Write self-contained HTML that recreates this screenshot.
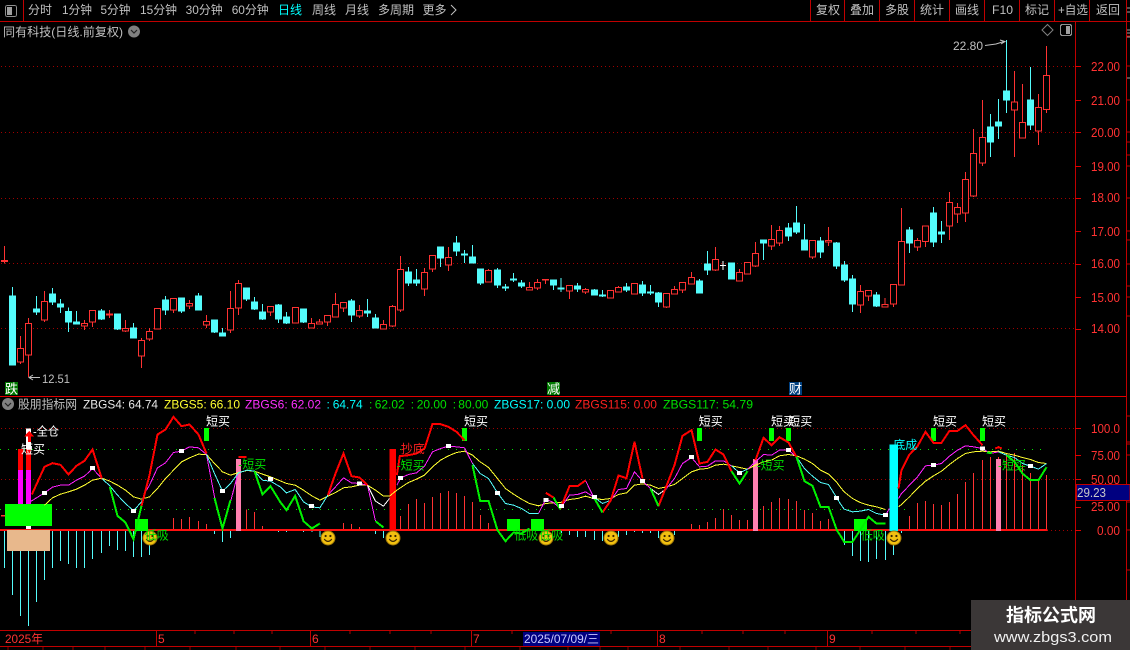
<!DOCTYPE html>
<html><head><meta charset="utf-8"><title>同有科技</title>
<style>
html,body{margin:0;padding:0;background:#000;width:1130px;height:650px;overflow:hidden}
svg{display:block}
text{font-family:"Liberation Sans","WenQuanYi Zen Hei","Noto Sans CJK SC",sans-serif;font-size:12px}
.tb{fill:#c0c0c0}
.ax{fill:#ff3232;font-size:13px}
.w{fill:#fff}
.g{fill:#00e000}
</style></head><body>
<svg width="1130" height="650" viewBox="0 0 1130 650" xmlns="http://www.w3.org/2000/svg">
<rect width="1130" height="650" fill="#000"/>

<!-- frame lines -->
<g shape-rendering="crispEdges" fill="none">
<path d="M0 21.5H1130M23.5 0V21M810.5 0V21M844.5 0V21M879.5 0V21M914.5 0V21M949.5 0V21M984.5 0V21M1019.5 0V21M1054.5 0V21M1089.5 0V21M1126.5 0V600" stroke="#c00000"/>
<path d="M1075.5 21V650" stroke="#c00000" stroke-width="1"/>
<path d="M0 396.5H1126" stroke="#e00000"/>
<path d="M0 630.5H1075M0 646.5H1075" stroke="#c00000"/>
<path d="M156.5 631V646M310.5 631V646M471.5 631V646M657.5 631V646M827.5 631V646" stroke="#c00000"/>
<path d="M195 631v3M234 631v3M272 631v3M350 631v3M390 631v3M431 631v3M512 631v3M611 631v3M702 631v3M743 631v3M785 631v3M872 631v3M916 631v3M960 631v3M1001 631v3M1040 631v3" stroke="#b00000"/>
<path d="M8 647v3M43 647v3M73 647v3M105 647v3M145 647v3M190 647v3M236 647v3M280 647v3M325 647v3M370 647v3M415 647v3M465 647v3M520 647v3M568 647v3M600 647v3M628 647v3M680 647v3M729 647v3M768 647v3M816 647v3M860 647v3M905 647v3M950 647v3M1001 647v3M1046 647v3" stroke="#900000"/>
<path d="M1075 66.5h6M1075 100.5h6M1075 132.5h6M1075 166.5h6M1075 198.5h6M1075 231.5h6M1075 264.5h6M1075 297.5h6M1075 329.5h6M1075 428.5h6M1075 455.5h6M1075 479.5h6M1075 507.5h6M1075 530.5h6" stroke="#e00000"/>
<path d="M1126 36h4M1126 66h4M1126 100h4M1126 132h4M1126 142h4M1126 155h4M1126 166h4M1126 198h4M1126 231h4M1126 240h4M1126 264h4M1126 286h4M1126 297h4M1126 316h4M1126 416h4M1126 442h4M1126 444h4M1126 455h4M1126 489h4M1126 502h4M1126 530h4M1126 570h4" stroke="#c00000"/>
<path d="M1127 8h3M1127 12h3M1127 30h3M1127 33h3M1127 37h3M1127 78h3" stroke="#a0a0a0"/>
</g>

<!-- dotted grids -->
<g fill="none">
<path d="M1 66.5H1075M1 132.5H1075M1 198.5H1075M1 263.5H1075M1 328.5H1075M1 428.5H1075M1 479.5H1075M1047 530.5H1075" stroke="#a00000" stroke-dasharray="1 3"/>
<path d="M0 449.5H1046M0 509.5H910" stroke="#00e000" stroke-dasharray="1 7"/>
</g>

<!-- candles: section 1 -->
<g transform="translate(.167,230.167) scale(.33333)" shape-rendering="crispEdges" stroke-width="3">
<path fill="none" stroke="#ff3232" d="M13 48V100M61 318V402M85 264V440M133 183V276M253 270V300M277 240V291M328 240V264M376 270V306M424 324V414M448 294V333M472 234V297M520 204V249M568 210V237M619 255V294M691 183V309M715 150V255M811 228V258"/>
<path fill="#000" stroke="#ff3232" d="M4 91h18V94h-18zM52 355h18V395h-18zM76 280h18V374h-18zM124 214h18V269h-18zM244 280h18V288h-18zM268 241h18V275h-18zM319 252h18V255h-18zM367 295h18V302h-18zM415 331h18V377h-18zM439 304h18V327h-18zM463 235h18V296h-18zM511 205h18V240h-18zM559 220h18V228h-18zM610 274h18V285h-18zM682 235h18V299h-18zM706 160h18V233h-18zM802 229h18V246h-18z"/>
<path fill="#54fcfc" stroke="#54fcfc" d="M37 171V405M28 198h18V405h-18zM109 198V255M100 237h18V246h-18zM157 174V225M148 192h18V216h-18zM181 207V249M172 222h18V231h-18zM205 232V306M196 244h18V276h-18zM229 243V282M220 276h18V282h-18zM304 237V270M295 243h18V267h-18zM352 252V300M343 252h18V297h-18zM400 279V324M391 294h18V324h-18zM496 198V255M487 210h18V240h-18zM544 204V249M535 204h18V243h-18zM595 189V240M586 198h18V240h-18zM643 270V309M634 270h18V306h-18zM667 294V318M658 309h18V318h-18zM739 174V213M730 174h18V207h-18zM763 201V240M754 216h18V237h-18zM787 222V270M778 246h18V267h-18zM835 222V279M826 225h18V267h-18z"/>
</g>
<!-- section 2 -->
<g transform="translate(280.167,230.167) scale(.33333)" shape-rendering="crispEdges" stroke-width="3">
<path fill="none" stroke="#ff3232" d="M46 231V279M94 264V294M118 267V282M142 255V288M166 189V261M190 216V246M238 225V264M310 270V297M337 225V291M361 78V246M433 114V198M457 75V126M505 51V123M625 117V156M748 156V180M772 147V180M796 147V162"/>
<path fill="#000" stroke="#ff3232" d="M37 232h18V278h-18zM85 280h18V293h-18zM109 275h18V281h-18zM133 256h18V275h-18zM157 223h18V260h-18zM181 217h18V233h-18zM229 241h18V258h-18zM301 283h18V296h-18zM328 229h18V288h-18zM352 118h18V240h-18zM424 127h18V177h-18zM448 76h18V117h-18zM496 82h18V105h-18zM616 121h18V156h-18zM739 172h18V179h-18zM763 157h18V173h-18zM787 148h18V150h-18z"/>
<path fill="#54fcfc" stroke="#54fcfc" d="M19 246V282M10 261h18V279h-18zM70 237V279M61 237h18V276h-18zM214 207V276M205 213h18V255h-18zM262 207V261M253 243h18V249h-18zM286 252V294M277 264h18V294h-18zM385 111V168M376 126h18V159h-18zM409 117V168M400 150h18V159h-18zM481 51V111M472 51h18V84h-18zM529 18V78M520 39h18V63h-18zM553 60V99M544 72h18V75h-18zM577 45V99M568 81h18V99h-18zM601 117V165M592 117h18V159h-18zM652 114V174M643 120h18V165h-18zM676 162V183M667 171h18V174h-18zM700 129V156M691 147h18V150h-18zM724 150V174M715 159h18V168h-18zM820 150V180M811 150h18V165h-18z"/>
</g>
<!-- section 3 -->
<g transform="translate(560.167,200.167) scale(.33333)" shape-rendering="crispEdges" stroke-width="3">
<path fill="none" stroke="#ff3232" d="M28 255V297M76 264V282M151 270V294M175 258V276M223 249V282M319 279V324M343 258V282M367 246V279M394 216V252M466 141V213M538 207V243M562 186V222M586 126V201M634 75V150M658 78V138M757 120V177M805 81V138"/>
<path fill="#000" stroke="#ff3232" d="M19 256h18V272h-18zM67 268h18V275h-18zM142 271h18V293h-18zM166 262h18V275h-18zM214 250h18V281h-18zM310 280h18V320h-18zM334 268h18V281h-18zM358 247h18V269h-18zM385 232h18V251h-18zM457 178h18V209h-18zM529 217h18V242h-18zM553 187h18V221h-18zM577 160h18V197h-18zM625 118h18V137h-18zM649 91h18V128h-18zM748 121h18V170h-18zM796 121h18V125h-18z"/>
<path fill="#54fcfc" stroke="#54fcfc" d="M3 234V276M-6 264h18V267h-18zM52 249V276M43 258h18V267h-18zM103 267V285M94 270h18V285h-18zM127 270V291M118 285h18V288h-18zM199 249V276M190 261h18V270h-18zM247 243V288M238 255h18V279h-18zM271 255V285M262 276h18V279h-18zM295 276V321M286 279h18V306h-18zM418 237V279M409 243h18V279h-18zM442 153V225M433 192h18V210h-18zM514 189V237M505 189h18V237h-18zM610 120V180M601 120h18V129h-18zM685 69V123M676 84h18V108h-18zM709 18V102M700 69h18V96h-18zM733 72V150M724 120h18V150h-18zM781 111V174M772 123h18V156h-18zM829 126V207M820 129h18V198h-18z"/>
<path fill="none" stroke="#fff" d="M489 183V210M480 196h18"/>
</g>
<!-- section 4 -->
<g transform="translate(840.167,30.167) scale(.33333)" shape-rendering="crispEdges" stroke-width="3">
<path fill="none" stroke="#ff3232" d="M61 765V849M85 780V813M135 804V831M160 762V831M184 534V764M232 624V663M256 586V651M328 486V630M352 519V579M376 426V576M400 297V501M427 210V408M523 123V381M547 162V324M595 192V345M619 48V249"/>
<path fill="#000" stroke="#ff3232" d="M52 784h18V824h-18zM76 781h18V797h-18zM126 823h18V830h-18zM151 763h18V821h-18zM175 634h18V764h-18zM223 631h18V650h-18zM247 587h18V634h-18zM319 517h18V587h-18zM343 532h18V551h-18zM367 448h18V548h-18zM391 370h18V497h-18zM418 322h18V398h-18zM514 216h18V239h-18zM538 277h18V323h-18zM586 232h18V302h-18zM610 136h18V238h-18z"/>
<path fill="#54fcfc" stroke="#54fcfc" d="M13 693V756M4 705h18V750h-18zM37 735V846M28 747h18V822h-18zM109 786V831M100 795h18V828h-18zM208 591V669M199 600h18V639h-18zM280 531V651M271 549h18V636h-18zM304 573V639M295 606h18V611h-18zM451 252V381M442 291h18V336h-18zM475 207V327M466 276h18V288h-18zM499 30V249M490 183h18V210h-18zM571 111V300M562 210h18V285h-18z"/>
</g>

<!-- lower panel -->
<g transform="translate(.167,395.167) scale(.33333)" shape-rendering="crispEdges" fill="none">
<!-- histogram cyan -->
<path stroke="#54fcfc" stroke-width="3" d="M13 405V519M37 405V600M61 405V663M85 405V692M109 405V621M133 405V555M157 405V519M181 405V498M205 405V507M229 405V519M253 405V519M277 405V492M304 405V474M328 405V453M352 405V465M376 405V468M400 405V486M424 405V486M448 405V480M643 405V417M667 405V441M691 405V429M835 405V411M859 405V411M885 405V408M910 405V411M935 405V411M959 405V426M983 405V420M1126 405V417M1150 405V429M1178 405V420M1684 405V414M1708 405V420M1732 405V426M1756 405V426M1783 405V435M1807 405V438M1831 405V441M1855 405V426M1879 405V420M1903 405V411M1927 405V414M1951 405V414M1975 405V429M1999 405V435M2023 405V420M2533 405V450M2557 405V483M2581 405V498M2605 405V501M2629 405V492M2656 405V495M2680 405V480M2704 405V414"/>
<!-- histogram red -->
<path stroke="#ff3232" stroke-width="3" d="M520 405V369M544 405V372M568 405V366M595 405V378M619 405V387M739 405V343M763 405V351M787 405V393M1030 405V384M1054 405V387M1078 405V396M1201 405V363M1225 405V327M1249 405V312M1273 405V324M1297 405V306M1321 405V294M1345 405V288M1369 405V294M1393 405V303M1417 405V321M1441 405V360M1465 405V384M2074 405V387M2098 405V390M2122 405V381M2146 405V369M2170 405V342M2194 405V360M2218 405V375M2242 405V375M2290 405V333M2314 405V321M2338 405V309M2365 405V312M2389 405V318M2413 405V345M2437 405V354M2461 405V378M2485 405V372M2509 405V396M2728 405V363M2752 405V324M2776 405V318M2800 405V327M2824 405V330M2848 405V321M2872 405V297M2896 405V261M2920 405V234M2947 405V195M2971 405V186M2995 405V186M3019 405V174M3043 405V174M3067 405V210M3091 405V234M3115 405V255M3139 405V240"/>
<path stroke="#ff1010" stroke-width="6" d="M0 405H3142"/>
<!-- left tower -->
<g stroke="none">
<rect x="54" y="162" width="15" height="63" fill="#f00"/><rect x="54" y="225" width="15" height="102" fill="#f0f"/>
<rect x="78" y="162" width="15" height="63" fill="#f00"/><rect x="78" y="225" width="15" height="102" fill="#f0f"/>
<rect x="78" y="100" width="15" height="62" fill="#fff"/>
<rect x="78" y="393" width="15" height="9" fill="#fff"/>
<path d="M87 107L102 124H92V140H83V124H72z" fill="#f00"/>
<rect x="3" y="360" width="12" height="4" fill="#f33"/>
<rect x="15" y="327" width="141" height="66" fill="#0f0"/>
<rect x="21" y="405" width="129" height="63" fill="#e8b88c"/>
<!-- big columns -->
<rect x="708" y="192" width="15" height="216" fill="#ff80b0"/>
<rect x="1168" y="162" width="20" height="243" fill="#f00"/>
<rect x="2259" y="192" width="15" height="216" fill="#ff80b0"/>
<rect x="2668" y="148" width="26" height="260" fill="#0ff"/>
<rect x="2988" y="192" width="15" height="216" fill="#ff80b0"/>
<!-- green squares -->
<rect x="405" y="372" width="39" height="36" fill="#0f0"/>
<rect x="1521" y="372" width="39" height="36" fill="#0f0"/>
<rect x="1593" y="372" width="39" height="36" fill="#0f0"/>
<rect x="2562" y="372" width="39" height="36" fill="#0f0"/>
<!-- green tags -->
<rect x="612" y="99" width="15" height="39" fill="#0f0"/>
<rect x="1386" y="99" width="15" height="39" fill="#0f0"/>
<rect x="2091" y="99" width="15" height="39" fill="#0f0"/>
<rect x="2307" y="99" width="15" height="39" fill="#0f0"/>
<rect x="2358" y="99" width="15" height="39" fill="#0f0"/>
<rect x="2793" y="99" width="15" height="39" fill="#0f0"/>
<rect x="2940" y="99" width="15" height="39" fill="#0f0"/>
</g>
<!-- yellow -->
<polyline stroke="#ffff30" stroke-width="3" points="133,330 157,308 181,297 205,290 229,282 253,270 277,255 305,249 329,258 352,270 376,285 400,305 424,312 448,305 472,280 496,250 520,225 544,200 568,188 595,177 619,178 643,205 667,230 691,240 715,232 740,226 763,228 787,237 811,245 840,257 859,265 885,270 910,285 935,302 959,315 983,303 1006,292 1030,278 1054,275 1078,270 1102,270 1126,285 1150,303 1168,303 1190,285 1225,262 1249,252 1273,240 1297,215 1321,195 1345,182 1369,172 1393,168 1417,180 1440,200 1465,217 1492,250 1516,280 1540,297 1564,312 1588,325 1615,332 1637,325 1660,323 1680,322 1708,313 1732,310 1756,303 1780,310 1807,313 1832,310 1855,298 1879,293 1903,270 1927,266 1951,270 1975,280 1999,275 2023,268 2047,250 2074,230 2098,222 2122,220 2146,210 2170,207 2194,212 2218,217 2242,222 2266,210 2290,200 2314,195 2338,182 2365,178 2389,182 2413,192 2437,205 2461,225 2485,237 2510,262 2520,275 2532,290 2557,310 2580,322 2605,330 2629,335 2656,343"/>
<polyline stroke="#ffff30" stroke-width="3" points="2695,335 2704,328 2728,305 2752,280 2776,258 2800,242 2824,228 2848,208 2872,190 2896,175 2920,170 2947,168 2971,170 2995,168 3019,175 3043,180 3067,187 3091,193 3115,202 3139,205"/>
<!-- magenta -->
<g stroke="#ff20ff" stroke-width="3">
<polyline points="93,318 133,293 157,276 181,270 205,270 229,255 253,243 277,220 305,250"/>
<polyline points="436,290 448,270 472,218 496,203 520,172 544,168 568,155 595,158 619,178 643,305 667,400 691,320 712,240"/>
<polyline points="983,300 1006,275 1030,248 1054,263 1078,265 1102,270 1126,378"/>
<polyline points="1190,270 1202,248 1225,238 1249,233 1273,213 1297,170 1321,160 1345,153 1369,155 1393,158 1417,205"/>
<polyline points="1615,355 1637,312 1660,322 1680,340 1708,300 1732,298 1756,290 1780,305"/>
<polyline points="1756,256 1780,305"/>
<polyline points="1832,315 1855,283 1879,280 1903,230 1927,258 1951,280"/>
<polyline points="1999,280 2023,250 2047,205 2074,187 2098,215 2122,213 2146,197 2170,197 2194,212"/>
<polyline points="2242,222 2266,200 2290,178 2314,180 2338,165 2365,165 2389,185"/>
<polyline points="2656,360 2668,340"/>
<polyline points="2695,310 2704,295 2728,270 2752,245 2776,212 2800,210 2824,205 2848,183 2872,165 2896,152 2920,155 2947,160 2971,175 2995,170"/>
</g>
<!-- cyan -->
<g stroke="#54fcfc" stroke-width="3">
<polyline points="305,250 329,272 352,300 376,325 400,347 424,320 436,290"/>
<polyline points="619,178 643,235 667,288 691,265 715,233 740,225 763,228 787,255 811,258 840,275 859,293 885,283 910,320 935,335 959,338 983,300"/>
<polyline points="1417,205 1440,235 1465,250 1492,293 1516,325 1540,330 1564,340 1588,355 1615,355"/>
<polyline points="1780,305 1807,325 1832,315"/>
<polyline points="2194,212 2218,233 2242,222"/>
<polyline points="2389,185 2413,220 2437,243 2461,262 2485,268 2510,308 2520,325 2532,342 2557,350 2580,348 2605,343 2629,355 2656,360"/>
<polyline points="2995,170 3019,180 3043,187 3067,205 3091,213 3115,222 3139,205"/>
</g>
<g stroke="#fff" stroke-width="3">
<polyline points="1102,270 1126,318 1150,333 1168,310"/>
<polyline points="1951,280 1975,298 1999,280"/>
</g>
<!-- thick red -->
<g stroke="#f00" stroke-width="6">
<polyline points="95,298 133,215 157,204 181,209 205,238 229,212 253,197 277,163 305,250"/>
<polyline points="424,332 448,240 472,118 496,103 520,65 544,93 568,88 595,118 619,175"/>
<polyline points="715,186 739,186"/>
<polyline points="983,300 1006,235 1030,175 1054,243 1078,247 1102,270"/>
<polyline points="1190,240 1199,183 1225,180 1249,175 1273,160 1297,87 1321,87 1345,95 1369,110 1393,135"/>
<polyline points="1637,293 1660,307"/>
<polyline points="1680,342 1708,273 1732,273 1756,256"/>
<polyline points="1807,352 1832,315 1855,241 1879,249 1903,140 1927,250"/>
<polyline points="1975,333 1999,272 2023,210 2047,122 2074,105 2098,205 2122,200 2146,163 2170,178 2194,228"/>
<polyline points="2266,195 2290,128 2314,150 2338,126 2365,142 2389,185"/>
<polyline points="2695,280 2704,225 2728,178 2752,153 2776,110 2800,143 2824,143 2848,107 2872,107 2896,90 2920,120 2947,150"/>
<polyline points="2985,160 2995,156 3005,160"/>
</g>
<!-- thick green -->
<g stroke="#00f000" stroke-width="6">
<polyline points="329,275 352,362 376,382 400,432 424,332"/>
<polyline points="643,308 667,400 691,315"/>
<polyline points="763,228 787,298 811,273 840,320 859,345 885,302 910,378 935,400 959,385"/>
<polyline points="1126,378 1150,397"/>
<polyline points="1417,210 1440,317 1465,317 1492,405 1516,438 1540,412 1564,415 1588,400"/>
<polyline points="1660,307 1680,342"/>
<polyline points="1780,305 1807,352"/>
<polyline points="1951,280 1975,333"/>
<polyline points="2194,228 2218,265 2242,228"/>
<polyline points="2389,185 2413,258 2437,272 2461,335 2485,335 2510,405 2520,420 2532,440 2557,440 2580,405 2605,365 2629,385 2656,385"/>
<polyline points="2960,172 2975,174"/>
<polyline points="3019,180 3043,200 3067,235 3091,255 3115,255 3139,216"/>
</g>
<!-- white markers -->
<path fill="#fff" stroke="none" d="M126 288h15v12h-15zM270 213h15v12h-15zM393 342h15v12h-15zM537 162h15v12h-15zM660 282h15v12h-15zM804 246h15v12h-15zM927 327h15v12h-15zM1071 259h15v12h-15zM1194 243h15v12h-15zM1338 147h15v12h-15zM1485 287h15v12h-15zM1630 309h15v12h-15zM1677 327h15v12h-15zM1776 299h15v12h-15zM1920 252h15v12h-15zM2067 180h15v12h-15zM2211 228h15v12h-15zM2358 159h15v12h-15zM2502 302h15v12h-15zM2649 354h15v12h-15zM2793 203h15v12h-15zM2940 154h15v12h-15zM3084 207h15v12h-15z"/>
</g>

<!-- smileys -->
<defs>
<g id="sm">
<circle r="7" fill="#f2c010" stroke="#9a7408" stroke-width="1"/>
<circle cx="-2.4" cy="-2" r="1.1" fill="#3a2400"/><circle cx="2.4" cy="-2" r="1.1" fill="#3a2400"/>
<path d="M-3.8 1Q0 5.8 3.8 1" fill="none" stroke="#3a2400" stroke-width="1.2"/>
</g>
</defs>
<use href="#sm" x="150" y="538"/><use href="#sm" x="328" y="538"/><use href="#sm" x="393" y="538"/><use href="#sm" x="546" y="538"/><use href="#sm" x="611" y="538"/><use href="#sm" x="667" y="538"/><use href="#sm" x="894" y="538"/>

<!-- chart labels -->
<text class="w" x="33" y="435.5" textLength="26" lengthAdjust="spacingAndGlyphs">-全仓</text>
<text class="w" x="21" y="453.5">短买</text>
<text class="w" x="206" y="425.5">短买</text>
<text class="w" x="464" y="425.5">短买</text>
<text class="w" x="698.7" y="425.5">短买</text>
<text class="w" x="771" y="425.5">短买</text>
<text class="w" x="788.3" y="425.5">短买</text>
<text class="w" x="933" y="425.5">短买</text>
<text class="w" x="982" y="425.5">短买</text>
<text class="g" x="238.3" y="468.5">-短买</text>
<text class="g" x="396.7" y="469.5">-短买</text>
<text class="g" x="756.7" y="469.5">-短买</text>
<text class="g" x="998" y="469.5">-短买</text>
<text x="400.7" y="453" fill="#ff2020">抄底</text>
<text x="893.3" y="449" fill="#00ffff">底成</text>
<text class="g" x="144.7" y="539.5">低吸</text>
<text class="g" x="514.3" y="539.5">低吸</text>
<text class="g" x="539.3" y="539.5">低吸</text>
<text class="g" x="860.7" y="539.5">低吸</text>

<!-- toolbar -->
<g shape-rendering="crispEdges">
<rect x="5.5" y="5.5" width="11" height="11" rx="2" fill="none" stroke="#909090"/>
<rect x="7" y="7" width="5" height="8" fill="#a0a0a0"/>
</g>
<text class="tb" x="28" y="14">分时</text>
<text class="tb" x="62" y="14" textLength="30" lengthAdjust="spacingAndGlyphs">1分钟</text>
<text class="tb" x="100.5" y="14" textLength="30" lengthAdjust="spacingAndGlyphs">5分钟</text>
<text class="tb" x="140" y="14" textLength="37" lengthAdjust="spacingAndGlyphs">15分钟</text>
<text class="tb" x="185.6" y="14" textLength="37" lengthAdjust="spacingAndGlyphs">30分钟</text>
<text class="tb" x="231.7" y="14" textLength="37" lengthAdjust="spacingAndGlyphs">60分钟</text>
<text x="278" y="14" fill="#00ffff">日线</text>
<text class="tb" x="312" y="14">周线</text>
<text class="tb" x="345" y="14">月线</text>
<text class="tb" x="378" y="14">多周期</text>
<text class="tb" x="422.5" y="14">更多</text>
<path d="M451 5l5 5-5 5" fill="none" stroke="#c0c0c0"/>
<text class="tb" x="816" y="14">复权</text>
<text class="tb" x="850" y="14">叠加</text>
<text class="tb" x="885" y="14">多股</text>
<text class="tb" x="920" y="14">统计</text>
<text class="tb" x="955" y="14">画线</text>
<text class="tb" x="992" y="14" textLength="21" lengthAdjust="spacingAndGlyphs">F10</text>
<text class="tb" x="1025" y="14">标记</text>
<text class="tb" x="1058" y="14" textLength="30" lengthAdjust="spacingAndGlyphs">+自选</text>
<text class="tb" x="1096" y="14">返回</text>

<!-- title row -->
<text class="tb" x="3" y="36" textLength="120" lengthAdjust="spacingAndGlyphs">同有科技(日线.前复权)</text>
<circle cx="134" cy="31.5" r="6" fill="#808080"/>
<path d="M131 30l3 3 3-3" fill="none" stroke="#222" stroke-width="1.2"/>
<path d="M1047.5 24.5l5.5 5.5-5.5 5.5-5.5-5.5z" fill="none" stroke="#808080"/>
<g shape-rendering="crispEdges">
<rect x="1060.5" y="24.5" width="11" height="11" rx="2" fill="none" stroke="#909090" stroke-width="1.3"/>
<rect x="1066" y="26" width="4" height="8" fill="#a0a0a0"/>
</g>

<!-- high low labels -->
<text class="tb" x="953" y="50" textLength="30" lengthAdjust="spacingAndGlyphs">22.80</text>
<path d="M985 45.5L996 44L1004 41.5M1000 40L1005 41.5L1001 44" fill="none" stroke="#c0c0c0"/>
<text class="tb" x="42" y="383" textLength="28" lengthAdjust="spacingAndGlyphs">12.51</text>
<path d="M40 377.5H29M33 375L29 377.5L33 380" fill="none" stroke="#c0c0c0"/>

<!-- badges -->
<rect x="5" y="382" width="13" height="13" fill="#007800"/>
<text x="5" y="393.5" fill="#fff" style="font-size:13px">跌</text>
<rect x="547" y="382" width="13" height="13" fill="#007800"/>
<text x="547" y="393.5" fill="#fff" style="font-size:13px">减</text>
<rect x="789" y="382" width="13" height="13" fill="#004080"/>
<text x="789" y="393.5" fill="#fff" style="font-size:13px">财</text>

<!-- axis labels upper -->
<text class="ax" x="1091" y="71" textLength="29" lengthAdjust="spacingAndGlyphs">22.00</text>
<text class="ax" x="1091" y="105" textLength="29" lengthAdjust="spacingAndGlyphs">21.00</text>
<text class="ax" x="1091" y="137" textLength="29" lengthAdjust="spacingAndGlyphs">20.00</text>
<text class="ax" x="1091" y="171" textLength="29" lengthAdjust="spacingAndGlyphs">19.00</text>
<text class="ax" x="1091" y="202" textLength="29" lengthAdjust="spacingAndGlyphs">18.00</text>
<text class="ax" x="1091" y="236" textLength="29" lengthAdjust="spacingAndGlyphs">17.00</text>
<text class="ax" x="1091" y="268" textLength="29" lengthAdjust="spacingAndGlyphs">16.00</text>
<text class="ax" x="1091" y="302" textLength="29" lengthAdjust="spacingAndGlyphs">15.00</text>
<text class="ax" x="1091" y="333" textLength="29" lengthAdjust="spacingAndGlyphs">14.00</text>

<!-- legend -->
<circle cx="8" cy="404" r="6" fill="#808080"/>
<path d="M5 403l3 3 3-3" fill="none" stroke="#222" stroke-width="1.2"/>
<text class="tb" x="18" y="408.5" textLength="59" lengthAdjust="spacingAndGlyphs">股朋指标网</text>
<text x="83" y="408.5" fill="#e8e8e8" textLength="75" lengthAdjust="spacingAndGlyphs">ZBGS4: 64.74</text>
<text x="164" y="408.5" fill="#ffff30" textLength="76" lengthAdjust="spacingAndGlyphs">ZBGS5: 66.10</text>
<text x="245" y="408.5" fill="#ff30ff" textLength="76" lengthAdjust="spacingAndGlyphs">ZBGS6: 62.02</text>
<text x="326.5" y="408.5" fill="#00ffff">:</text>
<text x="332.7" y="408.5" fill="#00ffff" textLength="30" lengthAdjust="spacingAndGlyphs">64.74</text>
<text x="369" y="408.5" fill="#00e000">:</text>
<text x="374.7" y="408.5" fill="#00e000" textLength="30" lengthAdjust="spacingAndGlyphs">62.02</text>
<text x="410.7" y="408.5" fill="#00e000">:</text>
<text x="416.7" y="408.5" fill="#00e000" textLength="30" lengthAdjust="spacingAndGlyphs">20.00</text>
<text x="452.7" y="408.5" fill="#00e000">:</text>
<text x="458.3" y="408.5" fill="#00e000" textLength="30" lengthAdjust="spacingAndGlyphs">80.00</text>
<text x="494" y="408.5" fill="#00ffff" textLength="76" lengthAdjust="spacingAndGlyphs">ZBGS17: 0.00</text>
<text x="575" y="408.5" fill="#ff2020" textLength="82" lengthAdjust="spacingAndGlyphs">ZBGS115: 0.00</text>
<text x="663" y="408.5" fill="#00e000" textLength="90" lengthAdjust="spacingAndGlyphs">ZBGS117: 54.79</text>

<!-- axis labels lower -->
<text class="ax" x="1091" y="433" textLength="29" lengthAdjust="spacingAndGlyphs">100.0</text>
<text class="ax" x="1091" y="460" textLength="29" lengthAdjust="spacingAndGlyphs">75.00</text>
<text class="ax" x="1091" y="484" textLength="29" lengthAdjust="spacingAndGlyphs">50.00</text>
<text class="ax" x="1091" y="511" textLength="29" lengthAdjust="spacingAndGlyphs">25.00</text>
<text class="ax" x="1097" y="535" textLength="23" lengthAdjust="spacingAndGlyphs">0.00</text>
<rect x="1076.5" y="484.5" width="53.5" height="16" fill="#000080" stroke="#c00000" shape-rendering="crispEdges"/>
<text x="1077" y="497" fill="#c8c8c8" style="font-size:13px" textLength="29" lengthAdjust="spacingAndGlyphs">29.23</text>

<!-- time axis -->
<text class="ax" x="5" y="643" style="font-size:12px" textLength="38" lengthAdjust="spacingAndGlyphs">2025年</text>
<text class="ax" x="158" y="643" style="font-size:12px">5</text>
<text class="ax" x="312" y="643" style="font-size:12px">6</text>
<text class="ax" x="473" y="643" style="font-size:12px">7</text>
<text class="ax" x="659" y="643" style="font-size:12px">8</text>
<text class="ax" x="829" y="643" style="font-size:12px">9</text>
<rect x="523" y="632" width="77" height="14" fill="#000080" shape-rendering="crispEdges"/>
<text x="524" y="643" fill="#c8c8ff" textLength="75" lengthAdjust="spacingAndGlyphs">2025/07/09/三</text>

<!-- watermark -->
<rect x="971" y="600" width="159" height="50" fill="#3b3737"/>
<text x="1006" y="621.5" fill="#fff" textLength="90" lengthAdjust="spacingAndGlyphs" style="font-size:18px;font-weight:bold;font-family:'Noto Sans CJK SC','WenQuanYi Zen Hei',sans-serif">指标公式网</text>
<text x="994" y="642" fill="#f0f0f0" textLength="118" lengthAdjust="spacingAndGlyphs" style="font-size:15px">www.zbgs3.com</text>
</svg>
</body></html>
